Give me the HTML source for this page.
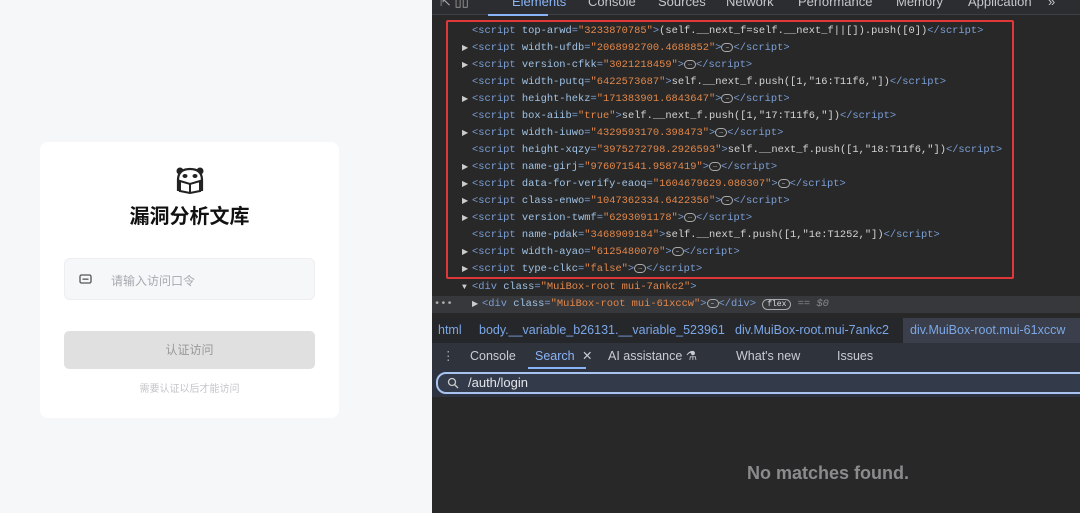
<!DOCTYPE html>
<html><head><meta charset="utf-8"><style>
*{margin:0;padding:0;box-sizing:border-box}
body{width:1080px;height:513px;overflow:hidden;position:relative;background:#f6f7f9;font-family:"Liberation Sans","Noto Sans CJK SC",sans-serif}
.left{position:absolute;left:0;top:0;width:432px;height:513px;background:#f6f7f9}
.card{position:absolute;left:40px;top:142px;width:299px;height:276px;background:#fff;border-radius:8px}
.title{position:absolute;left:0;right:0;top:58px;text-align:center;font-size:20px;font-weight:bold;color:#111}
.inp{position:absolute;left:24px;top:116px;width:251px;height:42px;background:#f6f7f9;border:1px solid #eceef1;border-radius:6px}
.inp span{position:absolute;left:46px;top:13px;font-size:12px;color:#a6a9ae}
.btn{position:absolute;left:24px;top:189px;width:251px;height:38px;background:#e0e0e0;border-radius:5px;text-align:center;line-height:38px;font-size:12px;color:#999}
.hint{position:absolute;left:0;right:0;top:238px;text-align:center;font-size:10px;color:#c3c5c8}
.dev{position:absolute;left:432px;top:0;width:648px;height:513px;background:#282828}
.tabs{position:absolute;left:0;top:0;width:648px;height:15px;background:#2b2d30;border-bottom:1px solid #3d3f44;color:#c4c7cc;font-size:13px;overflow:hidden}
.tabs span{position:absolute;top:-6px}
.code{position:absolute;left:0;top:23px;font-family:"Liberation Mono",monospace;font-size:10.4px;color:#9aa0a8;white-space:pre}
.ln{position:absolute;height:17px;line-height:17px}
.t{color:#7b9fd6}.a{color:#9fc3e6}.v{color:#e2874a}.x{color:#d4d4d4}
.tri{position:absolute;left:-10px;color:#ccc;font-size:8px}
.dots{display:inline-block;width:12px;height:9px;border:1px solid #aaa;border-radius:5px;font-size:6px;line-height:5px;text-align:center;vertical-align:middle;color:#ddd}
.red{position:absolute;left:14px;top:20px;width:568px;height:259px;border:2px solid #e0383a;border-radius:2px}
.sel{position:absolute;left:0;top:296px;width:648px;height:17px;background:#37383b}
.bc{position:absolute;left:0;top:318px;width:648px;height:25px;background:#26272b;font-size:12.5px;color:#7ba7e6;line-height:25px}
.bc span{position:absolute}
.dr{position:absolute;left:0;top:343px;width:648px;height:27px;background:#2f333c;font-size:12.5px;color:#c9ccd1;line-height:26px}
.dr span{position:absolute}
.sr{position:absolute;left:0;top:370px;width:648px;height:27px;background:#2d3340}
.sb{position:absolute;left:4px;top:2px;width:660px;height:22px;border:2px solid #a9c3f0;border-radius:10px;background:#333a4a;color:#e3e6ea;font-size:13px;line-height:18px;padding-left:30px}
.nm{position:absolute;left:0;width:792px;top:463px;text-align:center;font-size:18px;font-weight:bold;color:#8a8b8d}
</style></head><body>
<div class="left"><div class="card">
<svg style="position:absolute;left:134px;top:24px" width="32" height="28" viewBox="0 0 32 28"><circle cx="6" cy="5" r="3.5" fill="#222"/><circle cx="26" cy="5" r="3.5" fill="#222"/><path d="M4 14 Q4 3 16 3 Q28 3 28 14 L28 24 L16 26 L4 24 Z" fill="#fff" stroke="#222" stroke-width="2.2"/><ellipse cx="11" cy="10" rx="2.5" ry="2" fill="#222"/><ellipse cx="21" cy="10" rx="2.5" ry="2" fill="#222"/><path d="M6 15 L16 18 L26 15 L26 25 L16 27 L6 25 Z M16 18 L16 27" fill="#fff" stroke="#222" stroke-width="2"/></svg>
<div class="title">漏洞分析文库</div>
<div class="inp"><svg style="position:absolute;left:14px;top:15px" width="13" height="10"><rect x="1" y="1" width="11" height="8" rx="1.5" fill="none" stroke="#555" stroke-width="1.3"/><rect x="3.5" y="4.5" width="6" height="1.3" fill="#555"/></svg><span>请输入访问口令</span></div>
<div class="btn">认证访问</div>
<div class="hint">需要认证以后才能访问</div>
</div></div>
<div class="dev">
<div class="tabs"><span style="left:8px;color:#aaa">⇱ ▯▯</span><span style="left:80px;color:#8ab4f8">Elements</span><span style="left:156px">Console</span><span style="left:226px">Sources</span><span style="left:294px">Network</span><span style="left:366px">Performance</span><span style="left:464px">Memory</span><span style="left:536px">Application</span><span style="left:616px">»</span></div>
<div style="position:absolute;left:56px;top:14px;width:60px;height:2px;background:#8ab4f8"></div>
<div class="sel"></div>
<div class="code">
<div class="ln" style="left:40px;top:0"><span class="t">&lt;script </span><span class="a">top-arwd</span><span class="t">=</span><span class="v">"3233870785"</span><span class="t">&gt;</span><span class="x">(self.__next_f=self.__next_f||[]).push([0])</span><span class="t">&lt;/script&gt;</span></div>
<div class="ln" style="left:40px;top:17px"><span class="tri">▶</span><span class="t">&lt;script </span><span class="a">width-ufdb</span><span class="t">=</span><span class="v">"2068992700.4688852"</span><span class="t">&gt;</span><span class="dots">…</span><span class="t">&lt;/script&gt;</span></div>
<div class="ln" style="left:40px;top:34px"><span class="tri">▶</span><span class="t">&lt;script </span><span class="a">version-cfkk</span><span class="t">=</span><span class="v">"3021218459"</span><span class="t">&gt;</span><span class="dots">…</span><span class="t">&lt;/script&gt;</span></div>
<div class="ln" style="left:40px;top:51px"><span class="t">&lt;script </span><span class="a">width-putq</span><span class="t">=</span><span class="v">"6422573687"</span><span class="t">&gt;</span><span class="x">self.__next_f.push([1,"16:T11f6,"])</span><span class="t">&lt;/script&gt;</span></div>
<div class="ln" style="left:40px;top:68px"><span class="tri">▶</span><span class="t">&lt;script </span><span class="a">height-hekz</span><span class="t">=</span><span class="v">"171383901.6843647"</span><span class="t">&gt;</span><span class="dots">…</span><span class="t">&lt;/script&gt;</span></div>
<div class="ln" style="left:40px;top:85px"><span class="t">&lt;script </span><span class="a">box-aiib</span><span class="t">=</span><span class="v">"true"</span><span class="t">&gt;</span><span class="x">self.__next_f.push([1,"17:T11f6,"])</span><span class="t">&lt;/script&gt;</span></div>
<div class="ln" style="left:40px;top:102px"><span class="tri">▶</span><span class="t">&lt;script </span><span class="a">width-iuwo</span><span class="t">=</span><span class="v">"4329593170.398473"</span><span class="t">&gt;</span><span class="dots">…</span><span class="t">&lt;/script&gt;</span></div>
<div class="ln" style="left:40px;top:119px"><span class="t">&lt;script </span><span class="a">height-xqzy</span><span class="t">=</span><span class="v">"3975272798.2926593"</span><span class="t">&gt;</span><span class="x">self.__next_f.push([1,"18:T11f6,"])</span><span class="t">&lt;/script&gt;</span></div>
<div class="ln" style="left:40px;top:136px"><span class="tri">▶</span><span class="t">&lt;script </span><span class="a">name-girj</span><span class="t">=</span><span class="v">"976071541.9587419"</span><span class="t">&gt;</span><span class="dots">…</span><span class="t">&lt;/script&gt;</span></div>
<div class="ln" style="left:40px;top:153px"><span class="tri">▶</span><span class="t">&lt;script </span><span class="a">data-for-verify-eaoq</span><span class="t">=</span><span class="v">"1604679629.080307"</span><span class="t">&gt;</span><span class="dots">…</span><span class="t">&lt;/script&gt;</span></div>
<div class="ln" style="left:40px;top:170px"><span class="tri">▶</span><span class="t">&lt;script </span><span class="a">class-enwo</span><span class="t">=</span><span class="v">"1047362334.6422356"</span><span class="t">&gt;</span><span class="dots">…</span><span class="t">&lt;/script&gt;</span></div>
<div class="ln" style="left:40px;top:187px"><span class="tri">▶</span><span class="t">&lt;script </span><span class="a">version-twmf</span><span class="t">=</span><span class="v">"6293091178"</span><span class="t">&gt;</span><span class="dots">…</span><span class="t">&lt;/script&gt;</span></div>
<div class="ln" style="left:40px;top:204px"><span class="t">&lt;script </span><span class="a">name-pdak</span><span class="t">=</span><span class="v">"3468909184"</span><span class="t">&gt;</span><span class="x">self.__next_f.push([1,"1e:T1252,"])</span><span class="t">&lt;/script&gt;</span></div>
<div class="ln" style="left:40px;top:221px"><span class="tri">▶</span><span class="t">&lt;script </span><span class="a">width-ayao</span><span class="t">=</span><span class="v">"6125480070"</span><span class="t">&gt;</span><span class="dots">…</span><span class="t">&lt;/script&gt;</span></div>
<div class="ln" style="left:40px;top:238px"><span class="tri">▶</span><span class="t">&lt;script </span><span class="a">type-clkc</span><span class="t">=</span><span class="v">"false"</span><span class="t">&gt;</span><span class="dots">…</span><span class="t">&lt;/script&gt;</span></div>
<div class="ln" style="left:40px;top:256px"><span class="tri">▼</span><span class="t">&lt;div </span><span class="a">class</span><span class="t">=</span><span class="v">"MuiBox-root mui-7ankc2"</span><span class="t">&gt;</span></div>
<div class="ln" style="left:2px;top:273px;color:#aaa">•••</div>
<div class="ln" style="left:50px;top:273px"><span class="tri">▶</span><span class="t">&lt;div </span><span class="a">class</span><span class="t">=</span><span class="v">"MuiBox-root mui-61xccw"</span><span class="t">&gt;</span><span class="dots">…</span><span class="t">&lt;/div&gt;</span> <span style="border:1px solid #aaa;border-radius:7px;padding:0 4px;font-size:8px;color:#ddd">flex</span> <span style="color:#888;font-style:italic">== $0</span></div>
</div>
<div class="red"></div>
<div class="bc"><span style="left:6px">html</span><span style="left:47px">body.__variable_b26131.__variable_523961</span><span style="left:303px">div.MuiBox-root.mui-7ankc2</span><span style="left:471px;right:0;padding-left:7px;background:#3a3f4b">div.MuiBox-root.mui-61xccw</span></div>
<div class="dr"><span style="left:10px;color:#aaa">⋮</span><span style="left:38px">Console</span><span style="left:103px;color:#8ab4f8">Search</span><span style="left:150px">✕</span><span style="left:176px">AI assistance ⚗</span><span style="left:304px">What's new</span><span style="left:405px">Issues</span><span style="position:absolute;left:96px;top:24px;width:58px;height:2px;background:#8ab4f8"></span></div>
<div class="sr"><div class="sb"><svg style="position:absolute;left:9px;top:3px" width="12" height="12"><circle cx="5" cy="5" r="3.5" fill="none" stroke="#ccc" stroke-width="1.3"/><path d="M7.5 7.5 L11 11" stroke="#ccc" stroke-width="1.3"/></svg>/auth/login</div></div>
<div style="position:absolute;left:0;top:397px;width:648px;height:116px;background:#282828"></div>
<div class="nm">No matches found.</div>
</div>
</body></html>
